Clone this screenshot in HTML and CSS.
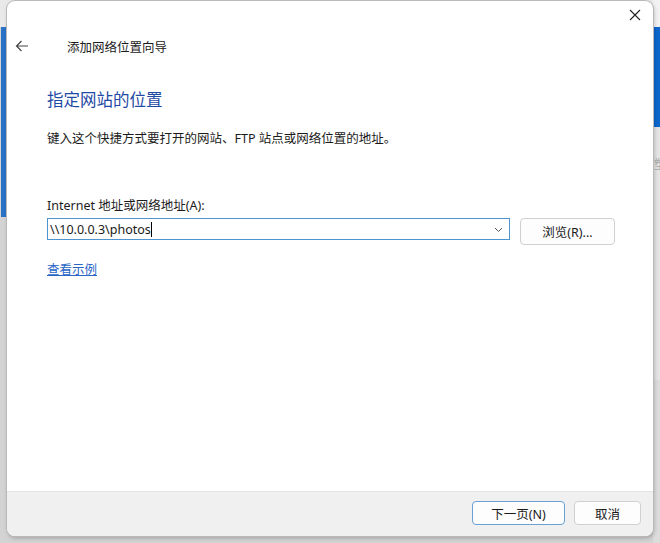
FILE: index.html
```html
<!DOCTYPE html>
<html lang="zh-CN">
<head>
<meta charset="utf-8">
<link rel="stylesheet" href="styles.css">
</head>
<body>
<div class="desk">
  <div class="strip-left"></div>
  <div class="strip-right"><span class="peek">塑</span></div>
  <div class="win">
    <div class="content">
      <div class="titlebar">
        <svg class="back" width="14" height="12" viewBox="0 0 14 12"><path d="M13 6H1.5M6.5 1L1.5 6l5 5" fill="none" stroke="#444" stroke-width="1.2"/></svg>
        <span class="wtitle">添加网络位置向导</span>
      </div>
      <svg class="close" width="12" height="12" viewBox="0 0 12 12"><path d="M1 1l10 10M11 1L1 11" fill="none" stroke="#222" stroke-width="1.1"/></svg>
      <div class="body">
        <h1 class="heading">指定网站的位置</h1>
        <p class="desc">键入这个快捷方式要打开的网站、FTP 站点或网络位置的地址。</p>
        <label class="lbl">Internet 地址或网络地址(A):</label>
        <div class="row">
          <div class="combo">
            <span class="val">\\10.0.0.3\photos</span><span class="caret"></span>
            <svg class="chev" width="9" height="6" viewBox="0 0 9 6"><path d="M1 1l3.5 3.5L8 1" fill="none" stroke="#555" stroke-width="1"/></svg>
          </div>
          <button class="btn browse">浏览(R)...</button>
        </div>
        <a class="link">查看示例</a>
      </div>
    </div>
    <div class="footer">
      <button class="btn primary">下一页(N)</button>
      <button class="btn cancel">取消</button>
    </div>
  </div>
</div>
</body>
</html>
```
FILE: styles.css
```css
html, body { margin: 0; padding: 0; }
body {
  width: 660px; height: 543px; overflow: hidden;
  background: #cfcfcf;
  font-family: "Noto Sans", "Noto Sans CJK SC", sans-serif;
  color: #1b1b1b;
}
.desk { position: relative; width: 660px; height: 543px; background: linear-gradient(#e9e9e9 0 27px, #d3d3d3 27px); }
.strip-left { position: absolute; left: 1px; top: 27px; width: 5px; height: 190px; background: #2a72c6; }
.strip-right { position: absolute; left: 653px; top: 0; width: 7px; height: 543px; overflow: hidden;
  background: linear-gradient(#f2f2f2 0 27px, #0b67cc 27px 127px, #e4e4e4 127px 380px, #dcdcdc 380px); }
.peek { position: absolute; left: 1px; top: 155px; font-size: 12px; color: #aaa; }
.win {
  position: relative;
  margin-left: 7px; top: 1px;
  width: 646px; height: 535px;
  background: #fff;
  border-radius: 8px;
  box-shadow: 0 0 0 1px #b9b9b9, 1px 2px 4px rgba(0,0,0,0.25);
  display: flex; flex-direction: column;
  overflow: hidden;
}
.content { flex: 1; position: relative; }
.titlebar { height: 28px; margin-top: 31px; display: flex; align-items: center; }
.back { margin-left: 8px; }
.wtitle { margin-left: 38px; font-size: 12.5px; color: #1b1b1b; }
.close { position: absolute; right: 12px; top: 8px; }
.body { padding: 0 0 0 40px; }
.heading { margin: 28px 0 0; font-weight: normal; font-size: 16.5px; color: #1f4ba5; line-height: 24px; }
.desc { margin: 19px 0 0; font-size: 12.5px; line-height: 16px; }
.lbl { display: block; margin-top: 51px; font-size: 12.5px; line-height: 16px; }
.row { display: flex; margin-top: 4px; align-items: flex-start; }
.combo {
  width: 461px; height: 20px; border: 1px solid #4f94cf; box-sizing: content-box;
  display: flex; align-items: center; position: relative; font-size: 12.5px;
}
.val { margin-left: 2px; }
.caret { display: inline-block; width: 1px; height: 15px; background: #000; }
.chev { position: absolute; right: 6px; top: 8px; }
.btn {
  font-family: inherit; font-size: 12.5px; color: #1b1b1b;
  background: #fdfdfd; border: 1px solid #d0d0d0; border-radius: 4px;
  padding: 0; box-sizing: border-box;
}
.browse { margin-left: 10px; width: 95px; height: 27px; }
.link { display: inline-block; margin-top: 14px; font-size: 12.5px; color: #2a66c6; text-decoration: underline; }
.footer {
  height: 45px; background: #f0f0f0; border-top: 1px solid #e3e3e3;
  display: flex; justify-content: flex-end; align-items: flex-start;
  padding: 9px 12px 0 0; box-sizing: border-box;
}
.primary { width: 93px; height: 24px; border: 1px solid #6aa0d2; margin-right: 9px; }
.cancel { width: 67px; height: 24px; }
```
